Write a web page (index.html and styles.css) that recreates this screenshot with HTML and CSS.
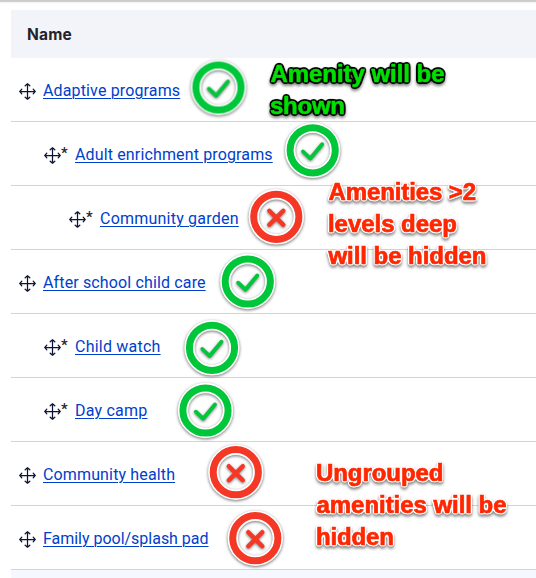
FILE: index.html
```html
<!DOCTYPE html>
<html lang="en">
<head>
<meta charset="utf-8">
<title>Amenities</title>
<link rel="stylesheet" href="styles.css">
</head>
<body>
<svg class="symbols" aria-hidden="true">
  <defs>
    <symbol id="move" viewBox="0 0 17 17">
      <path d="M8.5 .8v15.4M.8 8.5h15.4M6.2 2.8 8.5.8l2.3 2M6.2 14.2l2.3 2 2.3-2M2.8 6.2.8 8.5l2 2.3M14.2 6.2l2 2.3-2 2.3" fill="none" stroke="#0b1437" stroke-width="1.25" stroke-linecap="round" stroke-linejoin="round"/>
    </symbol>
    <symbol id="yes" viewBox="0 0 60 60">
      <circle cx="30" cy="30" r="22.5" fill="none" stroke="#fff" stroke-width="10.4"/>
      <circle cx="30" cy="30" r="22.6" fill="none" stroke="#00c63a" stroke-width="7"/>
      <path d="m20.3 31.2 7.3 7L39.5 24" fill="none" stroke="#00c63a" stroke-width="3.8" stroke-linecap="round" stroke-linejoin="round"/>
    </symbol>
    <symbol id="no" viewBox="0 0 60 60">
      <circle cx="30" cy="30" r="22.5" fill="none" stroke="#fff" stroke-width="10.4"/>
      <circle cx="30" cy="30" r="22.6" fill="none" stroke="#f53725" stroke-width="7"/>
      <path d="m23 24 14 14M37 24 23 38" fill="none" stroke="#f53725" stroke-width="4.4" stroke-linecap="round"/>
    </symbol>
    <filter id="outline-white" x="-5%" y="-10%" width="110%" height="125%" color-interpolation-filters="sRGB">
      <feGaussianBlur in="SourceAlpha" stdDeviation="1.3"/>
      <feComponentTransfer result="edge"><feFuncR type="linear" slope="0" intercept="1"/><feFuncG type="linear" slope="0" intercept="1"/><feFuncB type="linear" slope="0" intercept="1"/><feFuncA type="linear" slope="8" intercept="-.5"/></feComponentTransfer>
      <feMerge><feMergeNode in="edge"/><feMergeNode in="SourceGraphic"/></feMerge>
    </filter>
    <filter id="outline-black" x="-5%" y="-10%" width="110%" height="125%" color-interpolation-filters="sRGB">
      <feGaussianBlur in="SourceAlpha" stdDeviation="1.4"/>
      <feComponentTransfer result="edge"><feFuncA type="linear" slope="8" intercept="-.4"/></feComponentTransfer>
      <feMerge><feMergeNode in="edge"/><feMergeNode in="SourceGraphic"/></feMerge>
    </filter>
  </defs>
</svg>
<main class="page">
  <div class="table">
    <div class="head">Name</div>
    <div class="row"><svg class="move"><use href="#move"/></svg><a class="link" href="#">Adaptive programs</a></div>
    <div class="row child"><svg class="move"><use href="#move"/></svg><span class="star">*</span><a class="link" href="#">Adult enrichment programs</a></div>
    <div class="row grandchild"><svg class="move"><use href="#move"/></svg><span class="star">*</span><a class="link loose" href="#">Community garden</a></div>
    <div class="row"><svg class="move"><use href="#move"/></svg><a class="link" href="#">After school child care</a></div>
    <div class="row child"><svg class="move"><use href="#move"/></svg><span class="star">*</span><a class="link loose" href="#">Child watch</a></div>
    <div class="row child"><svg class="move"><use href="#move"/></svg><span class="star">*</span><a class="link loose" href="#">Day camp</a></div>
    <div class="row"><svg class="move"><use href="#move"/></svg><a class="link" href="#">Community health</a></div>
    <div class="row"><svg class="move"><use href="#move"/></svg><a class="link tight" href="#">Family pool/splash pad</a></div>
    <div class="foot"></div>
  </div>
  <svg class="notes" viewBox="0 0 536 578">
    <g class="badges">
      <use href="#yes" x="188.5" y="57.5" width="60" height="60"/>
      <use href="#yes" x="282.7" y="120.3" width="60" height="60"/>
      <use href="#no" x="246.3" y="186.8" width="60" height="60"/>
      <use href="#yes" x="217.8" y="251.5" width="60" height="60"/>
      <use href="#yes" x="182" y="317.8" width="60" height="60"/>
      <use href="#yes" x="175.5" y="380.5" width="60" height="60"/>
      <use href="#no" x="205.8" y="442.2" width="60" height="60"/>
      <use href="#no" x="225.3" y="508.2" width="60" height="60"/>
    </g>
    <g class="note"><g class="shown">
      <text x="270.5" y="82" textLength="174">Amenity will be</text>
      <text x="270" y="114" textLength="75">shown</text>
    </g></g>
    <g class="note"><g class="hidden">
      <text x="328.5" y="200" textLength="147.5">Amenities &gt;2</text>
      <text x="328" y="232" textLength="129">levels deep</text>
      <text x="328.5" y="264" textLength="158">will be hidden</text>
      <text x="316" y="481" textLength="127.5">Ungrouped</text>
      <text x="316.5" y="513" textLength="190">amenities will be</text>
      <text x="316" y="545" textLength="78">hidden</text>
    </g></g>
  </svg>
</main>
</body>
</html>
```
FILE: styles.css
```css
* { box-sizing: border-box; }
body { margin: 0; background: #fff; font-family: Roboto, "Liberation Sans", sans-serif; }
.symbols { position: absolute; width: 0; height: 0; }
.page {
  position: relative;
  width: 536px;
  height: 578px;
  overflow: hidden;
  padding: 10px 0 0 11px;
  background: linear-gradient(#cbcbcb 0, #cfcfcf 1.5px, #f6f6f6 2.5px, #fff 4px);
}
.head {
  height: 48px;
  padding-left: 16px;
  background: #f3f4f9;
  color: #232429;
  font-family: Inter, "Liberation Sans", sans-serif;
  font-size: 15.5px;
  font-weight: 700;
  letter-spacing: .2px;
  line-height: 49px;
}
.row {
  display: flex;
  align-items: center;
  height: 64px;
  padding-left: 8px;
  border-bottom: 1px solid #d3d4d9;
}
.child { padding-left: 33px; }
.grandchild { padding-left: 58px; }
.move { flex: none; width: 17px; height: 17px; margin-top: 3px; }
.star { width: 14px; color: #232429; font-size: 15px; font-weight: 500; line-height: 20px; margin-top: -1px; }
.link {
  margin-left: 7px;
  color: #003ecc;
  font-size: 16px;
  letter-spacing: .14px;
  line-height: 20px;
  margin-top: 3px;
  white-space: nowrap;
  text-decoration: underline;
  text-decoration-thickness: 1px;
  text-underline-offset: 1.5px;
}
.loose { letter-spacing: .22px; }
.tight { letter-spacing: -.02px; }
.star + .link { margin-left: 0; }
.foot { height: 20px; background: #f5f8ff; }
.notes { position: absolute; left: 0; top: 0; width: 536px; height: 578px; pointer-events: none; }
.badges { filter: drop-shadow(0 1.5px 1.5px rgba(0, 0, 0, .55)); }
.note {
  font: bold 24px "Liberation Sans", Arial, sans-serif;
  stroke-linejoin: round;
  filter: drop-shadow(0 2px 1.5px rgba(0, 0, 0, .5));
}
.shown { fill: #00e000; stroke: #00e000; stroke-width: .6px; filter: url(#outline-black); }
.hidden { fill: #ff2600; stroke: #ff2600; stroke-width: .7px; filter: url(#outline-white); }
```
